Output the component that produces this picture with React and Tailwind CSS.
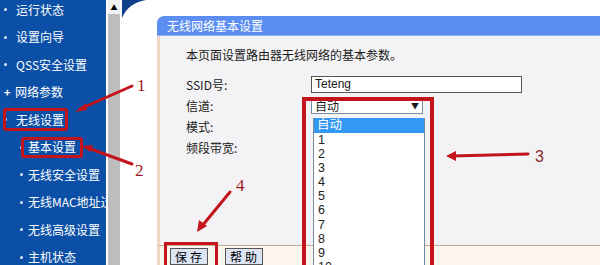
import React from 'react';

const menu = [
  { label: '运行状态' },
  { label: '设置向导' },
  { label: 'QSS安全设置' },
  { label: '网络参数', plus: true },
  { label: '无线设置', boxed: true },
  { label: '基本设置', sub: true, boxed: true },
  { label: '无线安全设置', sub: true },
  { label: '无线MAC地址过滤', sub: true },
  { label: '无线高级设置', sub: true },
  { label: '主机状态', sub: true },
];

const channels = ['1', '2', '3', '4', '5', '6', '7', '8', '9', '10'];

function Sidebar() {
  return (
    <div className="w-[106px] shrink-0 bg-[#0b50a6] overflow-hidden">
      <ul className="-mt-[4px] text-white text-[12px]">
        {menu.map((m) => (
          <li
            key={m.label}
            className={`h-[27.5px] flex items-center whitespace-nowrap ${m.sub ? 'pl-[20px]' : 'pl-[4px]'}`}
          >
            {m.plus ? (
              <span className="w-[11px] shrink-0 text-[11px] leading-none font-bold">+</span>
            ) : (
              <span className={`shrink-0 flex ${m.sub ? 'w-[8px]' : 'w-[12px]'}`}>
                <span className="w-[3px] h-[3px] rounded-full bg-[#dfe8f7]" />
              </span>
            )}
            <span>{m.label}</span>
          </li>
        ))}
      </ul>
    </div>
  );
}

function Scrollbar() {
  return (
    <div className="w-[16px] shrink-0 flex flex-col bg-white">
      <div className="flex">
        <div className="w-[2px]" />
        <div className="w-[12px] h-[14px] bg-[#f3f3f3] flex items-center justify-center text-[7px] text-black">▲</div>
      </div>
      <div className="flex flex-1">
        <div className="w-[2px]" />
        <div className="w-[12px] bg-[#bdbdbd]" />
      </div>
    </div>
  );
}

function Panel() {
  return (
    <div className="flex-1 flex flex-col bg-white relative">
      <svg className="absolute left-0 top-0" width="24" height="18" viewBox="0 0 24 18">
        <path d="M0 0 H24 C12 2 4 8 0 18 Z" fill="#0d3f8c" />
      </svg>
      <div className="h-[16px] shrink-0" />
      <div className="flex-1 ml-[35px] flex flex-col rounded-tl-[7px] overflow-hidden">
        <div className="h-[20px] shrink-0 bg-[#5b8ef0] text-white text-[12px] leading-[20px] pl-[10px] border-b border-[#8fb1f0]">
          无线网络基本设置
        </div>
        <div className="flex-1 bg-[#f3f3f5] border-l-[3px] border-[#ecd9c6] pl-[26px] pt-[11px] text-[12px] text-[#1a1a1a]">
          <div className="h-[16px] leading-[16px]">本页面设置路由器无线网络的基本参数。</div>
          <div className="mt-[13px] flex items-center h-[17px]">
            <span className="w-[125px]">SSID号:</span>
            <div className="w-[211px] h-[17px] bg-white border border-[#555] text-[12px] leading-[15px] pl-[3px] font-['Liberation_Sans',sans-serif]">Teteng</div>
          </div>
          <div className="mt-[5px] flex items-center h-[16px]">
            <span className="w-[125px]">信道:</span>
            <div className="w-[112px] h-[16px] bg-white border border-[#7a8aa0] flex items-center justify-between px-[3px] text-[12px]">
              <span>自动</span>
              <span className="text-[8px]">▼</span>
            </div>
          </div>
          <div className="mt-[4px] h-[17px] leading-[17px]">模式:</div>
          <div className="mt-[4px] h-[17px] leading-[17px]">频段带宽:</div>
        </div>
        <div className="h-[20px] shrink-0 bg-[#fdf6ef] border-t border-[#c9aa8c] border-l-[3px] border-l-[#ecd9c6] flex items-end gap-[17px] pl-[10px]">
          <button className="w-[38px] h-[17px] bg-[#dde4f4] border border-[#555] text-[12px] leading-[15px] tracking-[3px] pl-[2px]">保存</button>
          <button className="w-[38px] h-[17px] bg-[#dde4f4] border border-[#555] text-[12px] leading-[15px] tracking-[3px] pl-[2px]">帮助</button>
        </div>
      </div>
    </div>
  );
}

function Dropdown() {
  return (
    <div className="absolute left-[313px] top-[118px] w-[112px] h-[160px] bg-white border border-[#7a8aa0] border-t-0 text-[12.5px] leading-[14.2px] font-['Liberation_Sans','Noto_Sans_CJK_SC',sans-serif]">
      <div className="h-[14.5px] bg-[#3398f3] text-white pl-[3px]">自动</div>
      {channels.map((c) => (
        <div key={c} className="h-[14.2px] pl-[4px] text-[#222]">{c}</div>
      ))}
    </div>
  );
}

function Annotations() {
  const red = '#c3141c';
  return (
    <>
      <div className="absolute left-[3px] top-[108px] w-[65px] h-[23px] border-[3px] border-[#c3141c] rounded-[3px]" />
      <div className="absolute left-[21px] top-[137px] w-[62px] h-[21px] border-[3px] border-[#c3141c] rounded-[3px]" />
      <div className="absolute left-[302px] top-[97px] w-[132px] h-[180px] border-[4px] border-[#c3141c]" />
      <div className="absolute left-[164px] top-[242px] w-[54px] h-[30px] border-[3px] border-[#c3141c]" />
      <svg className="absolute left-0 top-0 pointer-events-none" width="600" height="265" viewBox="0 0 600 265">
        <g stroke={red} strokeWidth="3" strokeLinecap="round" fill="none">
          <line x1="80" y1="109" x2="132" y2="86" />
          <line x1="88" y1="148" x2="132" y2="164" />
          <line x1="452" y1="156" x2="528" y2="154" />
          <line x1="230" y1="192" x2="202" y2="226" />
        </g>
        <g fill={red}>
          <polygon points="75,112 86,103 87,110" />
          <polygon points="82,146 93,145 90,152" />
          <polygon points="446,156 456,151 456,161" />
          <polygon points="197,232 199,220 207,226" />
        </g>
        <g fill="#9b1a1f" fontFamily="'Liberation Serif', serif" fontSize="17">
          <text x="137" y="91">1</text>
          <text x="135" y="176">2</text>
          <text x="236" y="191">4</text>
        </g>
        <text x="535" y="162" fill="#8a2a2e" fontFamily="'Liberation Sans', sans-serif" fontSize="16">3</text>
      </svg>
    </>
  );
}

export default function App() {
  return (
    <div className="relative w-[600px] h-[265px] overflow-hidden flex font-['Noto_Sans_CJK_SC',sans-serif]">
      <Sidebar />
      <Scrollbar />
      <Panel />
      <Dropdown />
      <Annotations />
    </div>
  );
}
